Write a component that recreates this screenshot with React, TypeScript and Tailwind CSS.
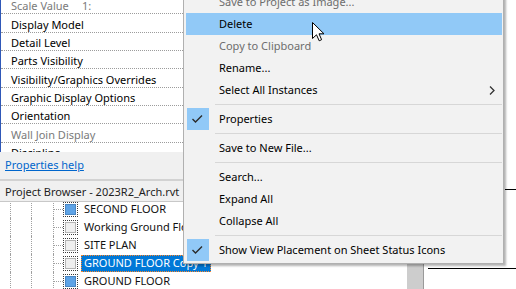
import React from "react";

const props = [
  { label: "Scale Value", value: "1:", muted: true },
  { label: "Display Model" },
  { label: "Detail Level" },
  { label: "Parts Visibility" },
  { label: "Visibility/Graphics Overrides" },
  { label: "Graphic Display Options" },
  { label: "Orientation" },
  { label: "Wall Join Display", muted: true },
  { label: "Discipline" },
];

const views = [
  { name: "SECOND FLOOR", blue: true },
  { name: "Working Ground Floor" },
  { name: "SITE PLAN" },
  { name: "GROUND FLOOR Copy 1", selected: true },
  { name: "GROUND FLOOR", blue: true },
];

type Item =
  | { sep: true }
  | {
      sep?: false;
      label: string;
      disabled?: boolean;
      hover?: boolean;
      checked?: boolean;
      submenu?: boolean;
    };

const menu: Item[] = [
  { label: "Save to Project as Image...", disabled: true },
  { label: "Delete", hover: true },
  { label: "Copy to Clipboard", disabled: true },
  { label: "Rename..." },
  { label: "Select All Instances", submenu: true },
  { sep: true },
  { label: "Properties", checked: true },
  { sep: true },
  { label: "Save to New File..." },
  { sep: true },
  { label: "Search..." },
  { label: "Expand All" },
  { label: "Collapse All" },
  { sep: true },
  { label: "Show View Placement on Sheet Status Icons", checked: true },
];

const ViewIcon = ({ blue }: { blue?: boolean }) => (
  <div className="w-[15px] h-[15px] border border-dotted border-[#3a3a3a] p-px bg-white shrink-0">
    <div
      className={
        blue
          ? "w-full h-full bg-[#5ea3e6] border border-[#4a86c2]"
          : "w-full h-full bg-[#efefef] border border-[#b4b4b4]"
      }
    />
  </div>
);

const ContextMenu = () => (
  <div className="absolute left-[183px] top-[-12px] w-[321px] bg-[#f2f2f2] border border-[#b0b0b0] pl-[2px] pr-[1px] py-[2px] shadow-[2px_2px_2px_rgba(0,0,0,0.3)] text-[11px] text-black">
    {menu.map((item, i) =>
      item.sep ? (
        <div key={i} className="h-[7px] flex items-center pl-[29px]">
          <div className="h-px flex-1 bg-[#d7d7d7]" />
        </div>
      ) : (
        <div
          key={i}
          className={`h-[22px] flex items-center ${item.hover ? "bg-[#91c9f7]" : ""}`}
        >
          <div
            className={`ml-[1px] w-[22px] h-[22px] shrink-0 ${item.checked ? "bg-[#91c9f7]" : ""}`}
          >
            {item.checked && (
              <svg width="22" height="22" viewBox="0 0 22 22">
                <path
                  d="M5.5 11 L8.5 14 L15 7.5"
                  fill="none"
                  stroke="#2b2b2b"
                  strokeWidth="1.4"
                />
              </svg>
            )}
          </div>
          <span className={`ml-[10px] pt-[1px] flex-1 whitespace-nowrap ${item.disabled ? "text-[#6d6d6d]" : ""}`}>
            {item.label}
          </span>
          {item.submenu && (
            <svg width="6" height="9" viewBox="0 0 6 9" className="mr-[7px]">
              <path d="M1 0.5 L5 4.5 L1 8.5" fill="none" stroke="#333" strokeWidth="1.3" />
            </svg>
          )}
        </div>
      )
    )}
  </div>
);

export default function App() {
  return (
    <div className="relative w-[516px] h-[289px] overflow-hidden bg-white flex font-['Noto_Sans','Open_Sans',sans-serif] text-black">
      <div className="w-[424px] h-full flex flex-col border-r border-[#9a9a9a] shrink-0">
        {/* properties grid */}
        <div className="h-[152px] overflow-hidden border-l border-[#2f58b8] bg-white">
          <div className="-mt-[4px]">
            {props.map((p) => (
              <div
                key={p.label}
                className={`h-[18.33px] border-b border-dotted border-[#9c9c9c] flex items-center pl-[10px] pt-[4px] text-[11px] whitespace-nowrap ${p.muted ? "text-[#7a7a7a]" : ""}`}
              >
                <span className={p.value ? "w-[71px]" : ""}>{p.label}</span>
                {p.value && <span>{p.value}</span>}
              </div>
            ))}
          </div>
        </div>
        <div className="h-[27px] bg-[#f0f0f0] flex items-center pl-[5px] text-[11px]">
          <span className="text-[#0066cc] underline">Properties help</span>
        </div>
        <div className="h-[2px] bg-[#d2d2d2]" />
        <div className="h-[21px] bg-[#f0f0f0] flex items-center pl-[5px] pt-[2px] text-[11px] text-[#1e1e1e] border-b border-[#c8c8c8]">
          Project Browser - 2023R2_Arch.rvt
        </div>
        {/* tree */}
        <div className="flex-1 flex bg-white overflow-hidden">
          <div className="flex-1 -mt-[2px]">
            {views.map((v) => (
              <div key={v.name} className="h-[18px] flex items-center text-[11px]">
                <div className="w-[10px] h-full shrink-0" />
                <div className="w-[21px] h-full shrink-0 border-l border-dotted border-[#a0a0a0]" />
                <div className="w-[22px] h-full shrink-0 border-l border-dotted border-[#a0a0a0]" />
                <div className="w-[10px] h-full shrink-0 border-l border-dotted border-[#a0a0a0] flex items-center">
                  <div className="w-full border-t border-dotted border-[#a0a0a0]" />
                </div>
                <ViewIcon blue={v.blue} />
                <span
                  className={
                    v.selected
                      ? "ml-[3px] h-[17px] flex items-center px-[2px] bg-[#0078d7] text-white border border-dotted border-[#ff8728] whitespace-nowrap"
                      : "ml-[6px] whitespace-nowrap text-[#111]"
                  }
                >
                  {v.name}
                </span>
              </div>
            ))}
          </div>
          <div className="w-[16px] bg-[#cdcdcd] shrink-0" />
        </div>
      </div>
      {/* drawing canvas */}
      <div className="flex-1 relative bg-white">
        <svg className="absolute inset-0" width="92" height="289">
          <line x1="81" y1="189.5" x2="92" y2="189.5" stroke="#000" />
          <line x1="4" y1="268.5" x2="92" y2="268.5" stroke="#000" />
        </svg>
      </div>
      <ContextMenu />
      {/* cursor */}
      <svg className="absolute left-[312px] top-[22px]" width="13" height="20" viewBox="0 0 13 20">
        <path
          d="M0.5 0.5 L0.5 16.5 L4.5 12.8 L7.2 18.8 L9.6 17.7 L7 11.8 L12 11.8 Z"
          fill="#fff"
          stroke="#000"
          strokeWidth="1"
          strokeLinejoin="miter"
        />
      </svg>
    </div>
  );
}
